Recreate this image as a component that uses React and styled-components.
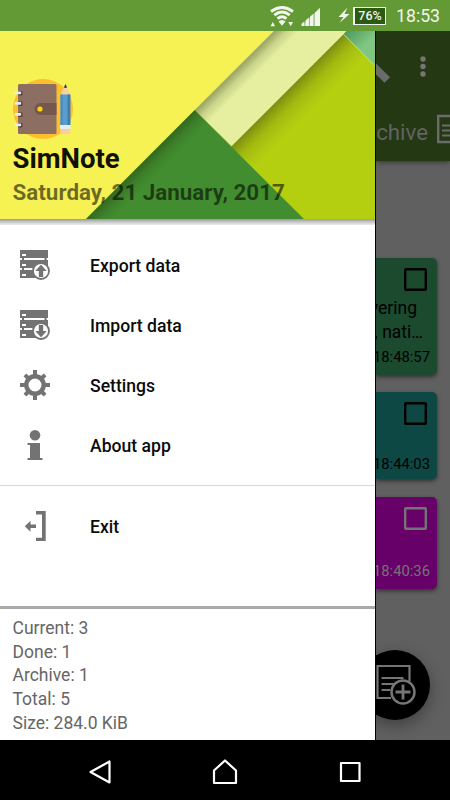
import React from "react";
import styled, { createGlobalStyle } from "styled-components";

const COLORS = {
    status: "#649a36",
    toolbar: "#233813",
    page: "#606060",
    dimmed: "#6b6b6b",
    icon: "#737373",
    statusText: "#f1f5ed",
};

const MENU = [
    { id: "export", label: "Export data" },
    { id: "import", label: "Import data" },
    { id: "settings", label: "Settings" },
    { id: "about", label: "About app" },
];

const STATS = [
    "Current: 3",
    "Done: 1",
    "Archive: 1",
    "Total: 5",
    "Size: 284.0 KiB",
];

const NOTES = [
    {
        time: "18:48:57",
        lines: ["vering", ", nati…"],
        color: "#1b4a2f",
        ink: "#000",
        height: 117,
        gap: 17,
        bottom: 9,
    },
    {
        time: "18:44:03",
        lines: [],
        color: "#0d4844",
        ink: "#000",
        height: 87,
        gap: 18,
        bottom: 6,
    },
    {
        time: "18:40:36",
        lines: [],
        color: "#670068",
        ink: "#747474",
        height: 92,
        gap: 0,
        bottom: 9,
    },
];

const StorageIcon = ({ down }) => (
    <svg width="30" height="30" viewBox="0 0 30 30">
        <path
            fill={COLORS.icon}
            d="M0 0h28v8H0zM0 10h28v8H0zM0 20h18v8H0zM2 8h2v2H2zM24.500 8h2v2h-2zM2 18h2v2H2z"
        />
        <path fill="#fff" d="M2 4h4v2H2zM2 14h4v2H2zM2 24h4v2H2zM4 8h20v2H4zM4 18h12v2H4z" />
        <circle cx="21" cy="21" r="8" fill="#fff" stroke={COLORS.icon} strokeWidth="1.8" />
        <path
            fill={COLORS.icon}
            transform={down ? "rotate(180 21 21)" : undefined}
            d="M21 14.800l5.800 6.200h-3.600v6h-4.400v-6h-3.600z"
        />
    </svg>
);

const GearIcon = () => (
    <svg width="30" height="30" viewBox="0 0 30 30">
        <circle cx="15" cy="15" r="8.700" fill="none" stroke={COLORS.icon} strokeWidth="4.400" />
        {[0, 45, 90, 135, 180, 225, 270, 315].map((angle) => (
            <path
                key={angle}
                d={angle % 90 ? "M13 .8h4v5h-4z" : "M13 0h4v6h-4z"}
                fill={COLORS.icon}
                transform={`rotate(${angle} 15 15)`}
            />
        ))}
    </svg>
);

const InfoIcon = () => (
    <svg width="30" height="30" viewBox="0 0 30 30" fill={COLORS.icon}>
        <circle cx="15" cy="5.300" r="5.300" />
        <path d="M7.500 13h12.500v15h2.500v2h-15v-2H10V15H7.500z" />
    </svg>
);

const ExitIcon = () => (
    <svg width="30" height="30" viewBox="0 0 30 30" fill={COLORS.icon}>
        <path d="M16 0h9.700v30H16v-3.300h6V3.500h-6z" />
        <path d="M4.800 15.200l5.700-5.400v3.700H16v3.500h-5.500v3.700z" />
    </svg>
);

const ICONS = {
    export: <StorageIcon />,
    import: <StorageIcon down />,
    settings: <GearIcon />,
    about: <InfoIcon />,
};

const NotebookIcon = () => (
    <svg width="60" height="60" viewBox="0 0 60 60">
        <circle cx="30" cy="30" r="30" fill="#fdbf2d" />
        <rect x="5" y="5" width="38.500" height="50" rx="1.500" fill="#8c6e63" />
        <path d="M43.500 24H27.500a6 6 0 0 0 0 12h16z" fill="#76574c" />
        <circle cx="27" cy="30" r="2.600" fill="#ffd500" />
        {[12, 22.5, 33.5, 44].map((y) => (
            <g key={y}>
                <rect x="5" y={y} width="4.500" height="4.400" rx="1" fill="#54403c" />
                <rect x="1.500" y={y + 0.4} width="6.700" height="2.800" rx="1" fill="#e8ebed" />
            </g>
        ))}
        <path d="M47.500 16l5-11 4.800 11z" fill="#f8cfa5" />
        <path d="M50.900 8.800l1.600-3.700 1.600 3.700z" fill="#25323a" />
        <path d="M47.500 15.500h9.800V46h-9.800z" fill="#5a9ecf" />
        <path d="M47.500 15.500h2.200V46h-2.200z" fill="#4b8cc0" />
        <path d="M54.500 15.500h2.800V46h-2.800z" fill="#3e7eae" />
        <path d="M47.500 49h9.800v4.500a1.500 1.500 0 0 1-1.500 1.500h-6.800a1.500 1.500 0 0 1-1.500-1.500z" fill="#f8cfa5" />
        <rect x="47" y="46" width="10.500" height="4" rx="1" fill="#e8ecef" />
    </svg>
);

const HeaderArt = () => (
    <Art viewBox="0 0 375 188" width="375" height="188">
        <defs>
            <linearGradient id="edge" gradientUnits="userSpaceOnUse" x1="173.350" y1="173.350" x2="196" y2="196">
                <stop offset="0" stopColor="#5f6b10" stopOpacity=".68" />
                <stop offset=".45" stopColor="#788812" stopOpacity=".28" />
                <stop offset="1" stopColor="#8b9c10" stopOpacity="0" />
            </linearGradient>
            <linearGradient id="fold" gradientUnits="userSpaceOnUse" x1="137" y1="137" x2="150" y2="150">
                <stop offset="0" stopColor="#20300a" stopOpacity=".4" />
                <stop offset=".5" stopColor="#20300a" stopOpacity=".14" />
                <stop offset="1" stopColor="#20300a" stopOpacity="0" />
            </linearGradient>
            <linearGradient id="mint" gradientUnits="userSpaceOnUse" x1="345" y1="2" x2="361" y2="18">
                <stop offset="0" stopColor="#4f9961" />
                <stop offset="1" stopColor="#80c681" />
            </linearGradient>
        </defs>
        <path d="M0 0h375v188H0z" fill="#b4cf10" />
        <path d="M346.700 0H375v188H158.700z" fill="url(#edge)" />
        <path d="M273.500 0h73.200L231.700 115 195 79z" fill="#e6efa0" />
        <path d="M194.500 79l109.500 109H86z" fill="#428d2f" />
        <path d="M274 0h72.700L231.700 115 195 79zM195 79l109 109H86z" fill="url(#fold)" />
        <path d="M343.500 3.200L346.700 0H375v34.700z" fill="url(#mint)" />
        <path d="M343.500 3.200L375 34.700" stroke="#bddf9f" strokeWidth="1" />
        <path d="M0 0h273.500L85.500 188H0z" fill="#f7f254" />
    </Art>
);

const StatusBar = () => (
    <Status>
        <svg width="92" height="31" viewBox="0 0 92 31" fill={COLORS.statusText}>
            <g fill="none" stroke={COLORS.statusText} strokeWidth="2.900">
                <path d="M1 11.500Q12 3.500 23 11.500" />
                <path d="M4.300 15.200Q12 9 19.700 15.200" />
                <path d="M7.500 18.700Q12 14.700 16.500 18.700" />
            </g>
            <path d="M8.500 21.500q3.500-3 7 0L12 25.800z" />
            <path d="M.5 26.200l2.300-4.200 2.300 4.200zM18.300 22h4.700l-2.300 4.200z" />
            <path d="M31.500 26v-2.200l2.800-2.300V26zM35.500 26v-5.500l3.400-3V26zM40 26v-9.200l3.400-3V26zM44.800 26V12.900l5.200-5V26z" />
            <path d="M31.500 26L50 7.500V26z" opacity=".4" />
            <path d="M77.500 7.500l-9 9.500h5l-4 6 10-9h-5z" />
        </svg>
        <Battery>76%</Battery>
        <Clock>18:53</Clock>
    </Status>
);

const Drawer = () => (
    <DrawerPanel>
        <DrawerHeader>
            <HeaderArt />
            <HeaderContent>
                <NotebookIcon />
                <AppName>SimNote</AppName>
                <Today>Saturday, 21 January, 2017</Today>
            </HeaderContent>
        </DrawerHeader>
        <HeaderShadow />
        <Menu>
            {MENU.map(({ id, label }) => (
                <MenuItem key={id}>
                    {ICONS[id]}
                    <MenuLabel>{label}</MenuLabel>
                </MenuItem>
            ))}
        </Menu>
        <ExitSection>
            <MenuItem>
                <ExitIcon />
                <MenuLabel>Exit</MenuLabel>
            </MenuItem>
        </ExitSection>
        <Stats>
            {STATS.map((stat) => (
                <li key={stat}>{stat}</li>
            ))}
        </Stats>
    </DrawerPanel>
);

const Note = ({ note }) => (
    <Card
        $color={note.color}
        $ink={note.ink}
        $height={note.height}
        $gap={note.gap}
        $bottom={note.bottom}
    >
        <Checkbox />
        {note.lines.map((line) => (
            <NoteLine key={line}>{line}</NoteLine>
        ))}
        <Time>{note.time}</Time>
    </Card>
);

const NotesPage = () => (
    <Page>
        <Toolbar>
            <Actions>
                <svg width="16" height="30" viewBox="0 0 16 30">
                    <path d="M0 7.500l14 13.800-5.500 5.500L0 18.300z" fill={COLORS.dimmed} />
                </svg>
                <svg width="6" height="22" viewBox="0 0 6 22" fill="#757575">
                    <circle cx="3" cy="3" r="2.700" />
                    <circle cx="3" cy="10.500" r="2.700" />
                    <circle cx="3" cy="18" r="2.700" />
                </svg>
            </Actions>
            <Tab>
                <TabLabel>rchive</TabLabel>
                <svg width="13" height="30" viewBox="0 0 13 30" fill="none" stroke={COLORS.dimmed}>
                    <path d="M14 2H1.200v26H14" strokeWidth="2.400" />
                    <path d="M5 11.500h9M5 16.500h9M5 21.500h9" strokeWidth="2" />
                </svg>
            </Tab>
        </Toolbar>
        <NoteList>
            {NOTES.map((note) => (
                <Note key={note.time} note={note} />
            ))}
        </NoteList>
        <AddButton>
            <svg width="40" height="42" viewBox="0 0 40 42" fill="none" stroke="#757575" strokeWidth="2.200">
                <path d="M15 34H1.500V2h32v15" />
                <path d="M5.500 14h22M5.500 20h16M5.500 26h9" />
                <circle cx="27" cy="28" r="11.500" fill="#000" strokeWidth="2.500" />
                <path d="M27 20.500v15M19.500 28h15" strokeWidth="2.800" />
            </svg>
        </AddButton>
    </Page>
);

const App = () => (
    <Screen>
        <GlobalStyle />
        <StatusBar />
        <Body>
            <Drawer />
            <NotesPage />
        </Body>
        <NavBar>
            <svg width="23" height="26" viewBox="0 0 23 26">
                <path d="M21.500 2.500v21L2.500 13z" />
            </svg>
            <svg width="26" height="26" viewBox="0 0 26 26">
                <path d="M2 11.500L13 1.500l11 10V24H2z" />
            </svg>
            <svg width="22" height="22" viewBox="0 0 22 22">
                <path d="M2 2h18.500v18H2z" />
            </svg>
        </NavBar>
    </Screen>
);

const GlobalStyle = createGlobalStyle`
    * {
        box-sizing: border-box;
    }

    body {
        margin: 0;
        font-family: Roboto, "Liberation Sans", sans-serif;
    }

    svg {
        display: block;
        flex-shrink: 0;
    }
`;

const Screen = styled.div`
    width: 450px;
    height: 800px;
    display: flex;
    flex-direction: column;
    overflow: hidden;
`;

const Status = styled.header`
    height: 31px;
    display: flex;
    align-items: center;
    justify-content: flex-end;
    padding-right: 10px;
    background: ${COLORS.status};
    color: ${COLORS.statusText};
`;

const Battery = styled.span`
    width: 33px;
    height: 18px;
    margin: 0 10px 0 -9px;
    border: 1px solid currentColor;
    border-left-width: 2px;
    background: #2c5a14;
    font-size: 12.5px;
    font-weight: 500;
    line-height: 16px;
    text-align: center;
`;

const Clock = styled.span`
    width: 44px;
    font-size: 17.7px;
    white-space: nowrap;
    padding-top: 1px;
`;

const Body = styled.div`
    flex: 1;
    min-height: 0;
    display: flex;
`;

const DrawerPanel = styled.aside`
    width: 376px;
    flex-shrink: 0;
    display: flex;
    flex-direction: column;
    background: #fff;
    border-right: 1px solid #000;
`;

const DrawerHeader = styled.div`
    position: relative;
    height: 188px;
`;

const Art = styled.svg`
    position: absolute;
    inset: 0;
`;

const HeaderContent = styled.div`
    position: relative;
    padding: 48px 0 0 12.5px;
    white-space: nowrap;
`;

const AppName = styled.h1`
    margin: 4px 0 0;
    font-size: 27.5px;
    font-weight: 700;
    line-height: 32px;
    color: #11110a;
`;

const Today = styled.div`
    margin-top: 4px;
    font-size: 22.4px;
    font-weight: 700;
    line-height: 27px;
    color: rgba(0, 0, 0, 0.56);
`;

const HeaderShadow = styled.div`
    height: 6px;
    background: linear-gradient(#999, #c8c8c8 50%, #eee);
`;

const Menu = styled.nav`
    height: 261px;
    padding-top: 10px;
    border-bottom: 1px solid #d7d7d7;
`;

const MenuItem = styled.div`
    height: 60px;
    display: flex;
    align-items: center;
    gap: 40px;
    padding-left: 20px;
    font-size: 17.6px;
    font-weight: 500;
    color: #0c0c0c;
`;

const MenuLabel = styled.span`
    padding-top: 2px;
`;

const ExitSection = styled.div`
    height: 120px;
    padding-top: 10px;
`;

const Stats = styled.ul`
    flex: 1;
    margin: 0;
    padding: 8px 12.5px 0;
    list-style: none;
    border-top: 3px solid #aaa;
    font-size: 17.5px;
    line-height: 23.7px;
    color: #666;
`;

const Page = styled.main`
    flex: 1;
    min-width: 0;
    display: flex;
    flex-direction: column;
    overflow: hidden;
    background: ${COLORS.page};
`;

const Toolbar = styled.div`
    height: 130px;
    display: flex;
    flex-direction: column;
    background: ${COLORS.toolbar};
    box-shadow: 0 1px 5px rgba(0, 0, 0, 0.5);
`;

const Actions = styled.div`
    height: 82px;
    display: flex;
    gap: 28px;
    padding-top: 25px;
`;

const Tab = styled.div`
    display: flex;
    align-items: center;
    justify-content: flex-end;
    gap: 9px;
    height: 32px;
    font-size: 22.3px;
    color: #626262;
`;

const TabLabel = styled.span`
    padding-top: 5px;
`;

const NoteList = styled.div`
    display: flex;
    flex-direction: column;
    padding: 97px 13px 0 0;
`;

const Card = styled.article`
    height: ${({ $height }) => $height}px;
    margin-bottom: ${({ $gap }) => $gap}px;
    display: flex;
    flex-direction: column;
    align-items: flex-end;
    padding: 10px 7px ${({ $bottom }) => $bottom}px 0;
    border-radius: 0 5px 5px 0;
    background: ${({ $color }) => $color};
    color: ${({ $ink }) => $ink};
    box-shadow: 0 2px 4px rgba(0, 0, 0, 0.5);
`;

const Checkbox = styled.div`
    width: 23px;
    height: 23px;
    flex-shrink: 0;
    margin: 0 3px 5px 0;
    box-shadow: inset 0 0 0 2.4px currentColor;
    border-radius: 2px;
`;

const NoteLine = styled.div`
    font-size: 17.5px;
    line-height: 24px;
    padding-right: 13px;
    white-space: nowrap;

    & + & {
        padding-right: 7px;
    }
`;

const Time = styled.time`
    margin-top: auto;
    font-size: 14.8px;
    line-height: 18px;
    white-space: nowrap;
`;

const AddButton = styled.div`
    width: 70px;
    height: 70px;
    flex-shrink: 0;
    margin: 61px 0 0 -16px;
    padding-left: 16px;
    display: flex;
    align-items: center;
    border-radius: 50%;
    background: #000;
    box-shadow: 0 5px 15px rgba(0, 0, 0, 0.35);
`;

const NavBar = styled.footer`
    height: 60px;
    display: flex;
    align-items: center;
    justify-content: space-between;
    padding: 4px 89px 0 88px;
    background: #000;

    path {
        fill: none;
        stroke: #fff;
        stroke-width: 2.2;
        stroke-linejoin: round;
    }
`;

export default App;
